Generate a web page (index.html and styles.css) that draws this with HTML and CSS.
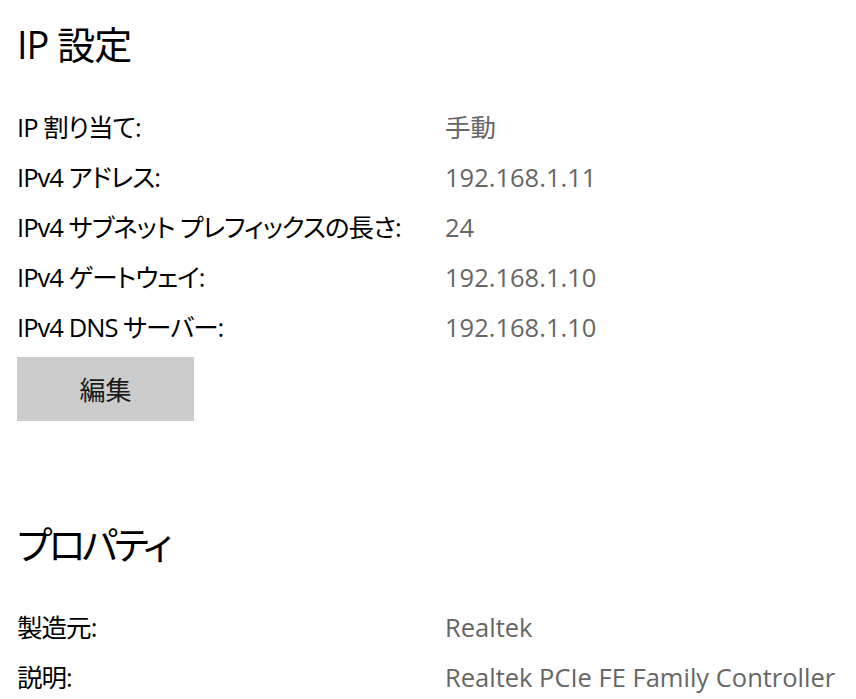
FILE: index.html
```html
<!DOCTYPE html>
<html lang="ja">
<head>
<meta charset="utf-8">
<title>IP 設定</title>
<link rel="stylesheet" href="styles.css">
</head>
<body>
<main class="page">
  <section class="section">
    <h2 class="title">IP 設定</h2>
    <dl class="props">
      <dt>IP 割り当て:</dt><dd>手動</dd>
      <dt>IPv4 アドレス:</dt><dd>192.168.1.11</dd>
      <dt>IPv4 サブネット プレフィックスの長さ:</dt><dd>24</dd>
      <dt>IPv4 ゲートウェイ:</dt><dd>192.168.1.10</dd>
      <dt>IPv4 DNS サーバー:</dt><dd>192.168.1.10</dd>
    </dl>
    <button class="btn" type="button">編集</button>
  </section>
  <section class="section section-props">
    <h2 class="title title-kana">プロパティ</h2>
    <dl class="props">
      <dt>製造元:</dt><dd>Realtek</dd>
      <dt>説明:</dt><dd>Realtek PCIe FE Family Controller</dd>
    </dl>
  </section>
</main>
</body>
</html>
```

FILE: styles.css
```css
html, body {
  margin: 0;
  padding: 0;
  background: #ffffff;
}

body {
  font-family: "Open Sans", "Noto Sans CJK JP", sans-serif;
  font-feature-settings: "palt";
  color: #000000;
}

.page {
  padding: 20px 0 0 17px;
}

.title {
  margin: 0;
  font-size: 38px;
  font-weight: 400;
  line-height: 48px;
  height: 48px;
  letter-spacing: -1px;
}

.title-kana {
  letter-spacing: -3.5px;
}

.props {
  margin: 34px 0 0 0;
  display: grid;
  grid-template-columns: 428px 1fr;
  grid-auto-rows: 50px;
  font-size: 25.5px;
  line-height: 50px;
}

.props dt,
.props dd {
  margin: 0;
  white-space: nowrap;
}

.props dt {
  letter-spacing: -0.95px;
}

.props dd {
  color: #666666;
}

.btn {
  margin-top: 5px;
  display: flex;
  align-items: center;
  justify-content: center;
  width: 177px;
  height: 64px;
  padding: 0;
  border: 0;
  background: #cccccc;
  color: #1a1a1a;
  font-family: inherit;
  font-feature-settings: "palt";
  font-size: 26px;
}

.section-props {
  margin-top: 99px;
}
```
